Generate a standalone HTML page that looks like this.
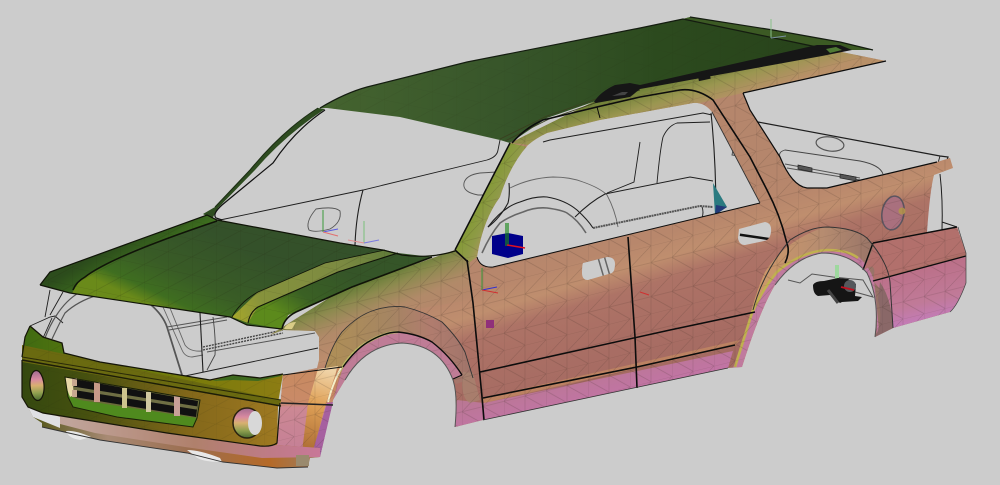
<!DOCTYPE html>
<html><head><meta charset="utf-8"><title>Car body</title>
<style>html,body{margin:0;padding:0;background:#ccc;overflow:hidden}svg{display:block}</style></head>
<body>
<svg width="1000" height="485" viewBox="0 0 1000 485" xmlns="http://www.w3.org/2000/svg">
<defs>
<pattern id="mesh" patternUnits="userSpaceOnUse" width="42" height="34" patternTransform="skewY(-14)">
<path d="M0 0H42M0 17H42M0 0V34M21 0V34M0 17L21 0M21 17L42 0M0 17L21 34M21 17L42 34" fill="none" stroke="#2c2018" stroke-width=".5" stroke-opacity=".24"/>
</pattern>
<pattern id="meshS" patternUnits="userSpaceOnUse" width="24" height="18" patternTransform="skewY(12)">
<path d="M0 0H24M0 0V18M0 18L24 0" fill="none" stroke="#20240c" stroke-width=".5" stroke-opacity=".28"/>
</pattern>
<linearGradient id="body" gradientUnits="userSpaceOnUse" x1="560" y1="230" x2="610" y2="395">
<stop offset="0" stop-color="#b5866c"/><stop offset=".2" stop-color="#b8876c"/><stop offset=".33" stop-color="#bf8e6e"/><stop offset=".45" stop-color="#ad7366"/><stop offset=".7" stop-color="#a96e64"/><stop offset="1" stop-color="#a46a62"/>
</linearGradient>
<linearGradient id="fend" gradientUnits="userSpaceOnUse" x1="372" y1="273" x2="398" y2="335">
<stop offset="0" stop-color="#58782e"/><stop offset=".28" stop-color="#8c8a4e"/><stop offset=".6" stop-color="#b08a68" stop-opacity=".85"/><stop offset="1" stop-color="#b08a68" stop-opacity="0"/>
</linearGradient>
<linearGradient id="roof" gradientUnits="userSpaceOnUse" x1="330" y1="0" x2="840" y2="0">
<stop offset="0" stop-color="#44632f"/><stop offset=".35" stop-color="#37552a"/><stop offset=".65" stop-color="#2c4a1e"/><stop offset="1" stop-color="#27421a"/>
</linearGradient>
<linearGradient id="rail" gradientUnits="userSpaceOnUse" x1="700" y1="68" x2="712" y2="106">
<stop offset="0" stop-color="#6a7e34"/><stop offset=".5" stop-color="#9a9650"/><stop offset="1" stop-color="#b89068"/>
</linearGradient>
<linearGradient id="pillar" gradientUnits="userSpaceOnUse" x1="478" y1="190" x2="508" y2="205">
<stop offset="0" stop-color="#7f9a2e"/><stop offset=".6" stop-color="#8f9a48"/><stop offset="1" stop-color="#b09660"/>
</linearGradient>
<linearGradient id="hood" gradientUnits="userSpaceOnUse" x1="200" y1="225" x2="160" y2="310">
<stop offset="0" stop-color="#34512a"/><stop offset=".55" stop-color="#395c26"/><stop offset=".85" stop-color="#3f6e20"/><stop offset="1" stop-color="#6a8a1a"/>
</linearGradient>
<linearGradient id="hoodL" gradientUnits="userSpaceOnUse" x1="125" y1="240" x2="145" y2="275">
<stop offset="0" stop-color="#2c4c1c"/><stop offset=".7" stop-color="#3e701e"/><stop offset="1" stop-color="#6a8a1a"/>
</linearGradient>
<linearGradient id="band" gradientUnits="userSpaceOnUse" x1="232" y1="318" x2="395" y2="252">
<stop offset="0" stop-color="#a8a82a"/><stop offset=".2" stop-color="#86923c"/><stop offset=".7" stop-color="#7c8a42"/><stop offset="1" stop-color="#5e7a38"/>
</linearGradient>
<linearGradient id="hoodR" gradientUnits="userSpaceOnUse" x1="345" y1="270" x2="300" y2="330">
<stop offset="0" stop-color="#355528"/><stop offset=".6" stop-color="#3a6024"/><stop offset="1" stop-color="#5c8a1c"/>
</linearGradient>
<linearGradient id="bumpT" gradientUnits="userSpaceOnUse" x1="20" y1="0" x2="290" y2="0">
<stop offset="0" stop-color="#3e6a12"/><stop offset=".3" stop-color="#5f7a0c"/><stop offset=".65" stop-color="#7a7c0a"/><stop offset="1" stop-color="#8e7c14"/>
</linearGradient>
<linearGradient id="bumpB" gradientUnits="userSpaceOnUse" x1="20" y1="0" x2="285" y2="0">
<stop offset="0" stop-color="#34480f"/><stop offset=".25" stop-color="#46500f"/><stop offset=".65" stop-color="#84681a"/><stop offset="1" stop-color="#a07a22"/>
</linearGradient>
<linearGradient id="lip" gradientUnits="userSpaceOnUse" x1="40" y1="0" x2="310" y2="0">
<stop offset="0" stop-color="#5a5a20"/><stop offset=".25" stop-color="#a88a74"/><stop offset=".55" stop-color="#9c6e50"/><stop offset=".85" stop-color="#b56a28"/><stop offset="1" stop-color="#a07a58"/>
</linearGradient>
<linearGradient id="lip2" gradientUnits="userSpaceOnUse" x1="70" y1="0" x2="320" y2="0">
<stop offset="0" stop-color="#c0a49a"/><stop offset=".5" stop-color="#b0806c"/><stop offset="1" stop-color="#c87898"/>
</linearGradient>
<linearGradient id="fog" x1="0" y1="0" x2="0" y2="1">
<stop offset="0" stop-color="#a06a90"/><stop offset=".3" stop-color="#d88aa0"/><stop offset=".5" stop-color="#d8b070"/><stop offset=".75" stop-color="#90a050"/><stop offset="1" stop-color="#4a6a30"/>
</linearGradient>
<linearGradient id="fnd" gradientUnits="userSpaceOnUse" x1="300" y1="370" x2="300" y2="460">
<stop offset="0" stop-color="#c88a60"/><stop offset=".36" stop-color="#c98a68"/><stop offset=".42" stop-color="#cc8894"/><stop offset="1" stop-color="#c47e96"/>
</linearGradient>
<linearGradient id="hi" gradientUnits="userSpaceOnUse" x1="328" y1="370" x2="306" y2="455">
<stop offset="0" stop-color="#f0d4a8"/><stop offset=".4" stop-color="#e0a258"/><stop offset="1" stop-color="#a86830"/>
</linearGradient>
<linearGradient id="sill" gradientUnits="userSpaceOnUse" x1="600" y1="360" x2="610" y2="400">
<stop offset="0" stop-color="#b87890"/><stop offset="1" stop-color="#c274a6"/>
</linearGradient>
<linearGradient id="rb" gradientUnits="userSpaceOnUse" x1="915" y1="268" x2="928" y2="325">
<stop offset="0" stop-color="#bb7088"/><stop offset=".6" stop-color="#c07a98"/><stop offset="1" stop-color="#c47cc0"/>
</linearGradient>
<linearGradient id="flare" gradientUnits="userSpaceOnUse" x1="335" y1="340" x2="472" y2="340">
<stop offset="0" stop-color="#ae8e58"/><stop offset=".4" stop-color="#a58562"/><stop offset=".7" stop-color="#b07c6e"/><stop offset="1" stop-color="#a0746a"/>
</linearGradient>
<linearGradient id="flareR" gradientUnits="userSpaceOnUse" x1="750" y1="260" x2="895" y2="260">
<stop offset="0" stop-color="#d09a68"/><stop offset=".5" stop-color="#b68c70"/><stop offset="1" stop-color="#8c6a64"/>
</linearGradient>
<path id="bodyP" fill-rule="evenodd" d="M270 335L340 291L455 250L510 143L593 102L640 87L817 47L886 61L743 93L750 110L780 157Q792 186 807 188L827 188L937 162L950 158L953 168L934 175Q930 190 927 232L957 227L966 253L966 283Q958 305 950 312L893 328L875 337Q880 300 867 273Q850 253 822 253Q795 257 775 285Q760 310 742 367L728 368L483 420L455 427Q458 395 453 380Q440 345 402 343Q365 345 345 380L333 400L320 457L277 445L283 375L317 368L319 360L319 337L315 331L283 330Z
M477 257Q483 220 500 197Q510 165 528 145Q536 138 547 133L600 120L693 103Q704 102 712 112L760 203L493 267Q480 268 477 257Z
M583 263L607 257Q615 257 615 264Q615 271 612 273L588 280Q582 280 582 273Q582 265 583 263Z
M739 229L765 222Q772 223 771 232Q770 240 764 241L745 245Q739 245 738 238Z"/>
<clipPath id="bodyC"><path clip-rule="evenodd" d="M270 335L340 291L455 250L510 143L593 102L640 87L817 47L886 61L743 93L750 110L780 157Q792 186 807 188L827 188L937 162L950 158L953 168L934 175Q930 190 927 232L957 227L966 253L966 283Q958 305 950 312L893 328L875 337Q880 300 867 273Q850 253 822 253Q795 257 775 285Q760 310 742 367L728 368L483 420L455 427Q458 395 453 380Q440 345 402 343Q365 345 345 380L333 400L320 457L277 445L283 375L317 368L319 360L319 337L315 331L283 330Z
M477 257Q483 220 500 197Q510 165 528 145Q536 138 547 133L600 120L693 103Q704 102 712 112L760 203L493 267Q480 268 477 257Z
M583 263L607 257Q615 257 615 264Q615 271 612 273L588 280Q582 280 582 273Q582 265 583 263Z
M739 229L765 222Q772 223 771 232Q770 240 764 241L745 245Q739 245 738 238Z"/></clipPath>
<clipPath id="bC"><path d="M30 326L43 337L62 343L64 353L100 362L180 375L210 380L233 375L260 378L283 374L278 403L277 445L260 446L167 433L43 413L28 407L22 397L22 357L25 337Z"/></clipPath>
<clipPath id="fC"><path d="M283 375L342 367L333 400L320 457L310 458L277 445Z"/></clipPath>
</defs>

<rect width="1000" height="485" fill="#cccccc"/>

<!-- interior wireframe -->
<g fill="none" stroke="#1e1e1e" stroke-width=".9">
<path d="M220 220L363 190L487 160Q497 157 498 150L500 140"/>
<path d="M363 190Q356 215 355 245" stroke-width="1.1"/>
<path d="M316 209Q335 206 340 211Q342 222 330 229Q315 233 309 230Q305 222 316 209Z" stroke="#555"/>
<path d="M480 173L497 172M497 195L478 195Q462 192 464 183Q466 175 480 173" stroke="#555"/>
<path d="M510 188Q530 178 553 177Q570 177 583 182Q600 188 607 195Q615 210 618 227" stroke="#666"/>
<path d="M488 227Q503 207 520 202Q535 196 547 197Q565 200 577 210Q588 220 593 228" stroke-width="1.1"/>
<path d="M482 253Q490 235 500 223Q510 216 523 212Q535 207 547 208Q562 210 567 213Q578 220 586 233" stroke="#666" stroke-width="1.6"/>
<path d="M509 183Q510 195 508 203Q500 218 488 227" stroke-width="1.1"/>
<path d="M575 217Q590 202 605 194L690 177L713 181" stroke-width="1"/>
<path d="M607 193L634 182L640 142"/>
<path d="M543 142L550 140L703 113L712 115" stroke-width="1"/>
<path d="M657 183Q660 150 663 137Q668 126 677 123L710 122"/>
<path d="M711 113Q716 160 716 215" stroke-width="1.1"/>
<path d="M593 228L680 210L700 206L713 207" stroke="#555" stroke-width="2" stroke-dasharray="2 .6"/>
<path d="M702 207Q704 212 702 218"/>
<path d="M758 122L940 156L948 157L946 163" stroke-width="1.2"/>
<path d="M940 156L938 163"/>
<path d="M780 157Q778 152 785 150L860 161Q880 165 883 174" stroke="#444"/>
<path d="M785 164L860 178M787 168L860 180" stroke="#555"/>
<path d="M733 150L732 155L738 156" stroke="#444"/>
<path d="M940 174Q943 200 942 230M942 222L957 227" stroke-width="1"/>
<ellipse cx="830" cy="144" rx="14" ry="7" transform="rotate(8 830 144)" stroke="#555" stroke-width="1.2"/>
<!-- engine bay -->
<path d="M30 326L50 317L55 316L63 323M50 290L45 317M63 292L50 315M43 338L52 318"/>
<path d="M45 338Q50 325 56 316Q66 300 80 292M52 339Q60 322 65 313Q78 301 98 295" stroke="#555" stroke-width="1.2"/>
<path d="M150 304Q163 315 167 327L182 375" stroke="#555" stroke-width="1.8"/>
<path d="M163 307L182 350Q185 357 192 357L203 355M170 308L185 345Q190 352 202 351" stroke="#666"/>
<path d="M167 327L227 317M169 330L227 320" stroke="#555"/>
<path d="M200 313L203 372" stroke-width="1.1"/>
<path d="M213 317Q216 340 215 355L207 370" stroke="#444"/>
<path d="M185 376L318 348"/>
<path d="M203 347L283 330M203 350L283 333" stroke="#444" stroke-width="1.4" stroke-dasharray="2 1"/>
<path d="M207 352L315 333" stroke="#555"/>
</g>
<!-- left A-pillar -->
<path d="M318 108Q283 130 250 170L215 207L203 214L212 219L218 208L255 170Q285 135 325 109Z" fill="#2e4c20"/>
<path d="M325 110Q295 130 273 163L222 205Q212 214 216 218L222 220" fill="none" stroke="#111" stroke-width="1.2"/>
<path d="M318 108Q283 130 250 170L215 207" fill="none" stroke="#1c2c14" stroke-width="1"/>
<!-- teal piece -->
<path d="M713 183L727 207L715 215Z" fill="#2a7a80"/><path d="M716 205L727 207L715 215Z" fill="#223a78"/>
<path d="M597 254L604 278M603 252L610 276" stroke="#666" stroke-width="1.5"/>
<path d="M740 234L770 240" stroke="#111" stroke-width="2.5" transform="rotate(-3 755 236)"/>
<path d="M800 166l14 3v4l-14-3zM842 175l16 3v4l-16-3z" fill="#555" stroke="#222" stroke-width=".7" transform="translate(-2 -1)"/>

<!-- rear hardware -->
<path d="M788 280L800 283L812 274L833 277L863 280L873 297L848 290" fill="none" stroke="#555" stroke-width="1"/>
<path d="M835 265h4v14h-4z" fill="#9ed89e"/>
<path d="M813 285Q815 281 824 281L838 278L848 279L856 284L855 296L862 297L858 301L842 302L840 303L830 295L818 296Q813 294 813 285Z" fill="#151515"/>
<path d="M828 290L838 303" stroke="#444" stroke-width="3"/>
<circle cx="850" cy="286" r="6" fill="#55585c"/>
<path d="M841 287L854 290" stroke="#c01020" stroke-width="1.8"/>

<!-- body -->
<use href="#bodyP" fill="url(#body)"/>

<g clip-path="url(#bodyC)">
<path d="M270 335L340 291L455 250L470 262L470 300L400 312L345 345L325 375L300 372Z" fill="url(#fend)"/>
<!-- front flare -->
<path d="M325 368Q332 345 342 332Q358 315 375 310Q390 305 405 307Q425 312 442 322Q458 338 465 352L474 378L456 384Q440 345 402 343Q365 345 345 380Z" fill="url(#flare)"/>
<!-- front arch inner -->
<path d="M343 367Q355 350 368 342Q385 332 398 332Q418 334 432 342Q450 356 462 375L453 379Q440 345 402 343Q365 345 345 380L333 400Z" fill="#bf7c96"/>
<path d="M338 374Q352 350 368 342Q385 332 398 332" fill="none" stroke="#bcbc68" stroke-width="2.6"/>
<!-- rear flare -->
<path d="M745 340Q752 300 765 272Q785 240 825 227Q855 228 870 240Q888 262 893 330L876 337Q880 300 867 273Q850 253 822 253Q795 257 775 285Q760 310 742 367Z" fill="url(#flareR)"/>
<path d="M752 313Q760 290 777 272Q800 251 827 249Q850 250 860 258Q870 268 874 280L880 340L876 340Q880 300 867 273Q850 253 822 253Q795 257 775 285Q760 310 742 367L733 368Z" fill="#c07a9e"/>
<path d="M735 367L752 313Q762 290 777 272Q800 252 827 250Q848 250 858 258" fill="none" stroke="#c0b050" stroke-width="2.6"/>
<!-- fuel door -->
<ellipse cx="893" cy="213" rx="11" ry="17" transform="rotate(10 893 213)" fill="#a9707e" stroke="#5c5560" stroke-width="1.5"/>
<circle cx="902" cy="211" r="3.5" fill="#b09050"/>
<!-- sill strips -->
<path d="M482 398L740 340L735 346L484 403Z" fill="#bc8262"/>
<path d="M484 403L733 351L728 368L483 420L455 427L457 400Z" fill="url(#sill)"/>
<path d="M463 372L473 373L480 400L470 403Q463 400 462 385Z" fill="#a88470" opacity=".7"/>
<!-- rear bumper -->
<path d="M875 243L957 227L966 253L873 280Q878 260 864 270Z" fill="#b2706c"/>
<path d="M873 281L966 256L966 283Q958 305 950 312L893 328Q892 300 873 281Z" fill="url(#rb)"/>
<path d="M878 300Q884 320 875 337L893 328Q892 300 880 282Z" fill="#8a6868"/>
<!-- roof rail and pillars -->
<path d="M512 143L540 126L593 102L640 87L817 47L886 61L743 93L700 103L600 120L547 133L528 145Z" fill="url(#rail)"/>
<path d="M455 250L510 143L528 147Q510 165 500 197Q483 220 477 257L470 262Z" fill="url(#pillar)"/>
<rect x="270" y="40" width="720" height="400" fill="url(#mesh)"/>
</g>
<!-- roof -->
<path d="M320 108Q345 93 367 87L467 62L640 28L683 19L690 17L773 30L840 42L873 50L850 50L817 47L640 87L593 102L547 118L510 143L500 140L400 117L327 108Z" fill="url(#roof)"/>
<path d="M690 17L773 30L840 42L873 50L850 50L817 47L683 19Z" fill="#3c5a24"/>
<path d="M320 108L327 108L400 117L500 140L547 118L593 102L640 87L817 47L683 19L467 62L367 87Z" fill="url(#meshS)" opacity=".5"/>
<path d="M320 108Q345 93 367 87L467 62L640 28L683 19L817 47M690 17L773 30L840 42L873 50" fill="none" stroke="#141c10" stroke-width="1.2"/>
<path d="M500 139L547 116L593 100L640 86M505 141L549 119L595 103L640 90" fill="none" stroke="#3a4020" stroke-width=".9"/>
<!-- roof rail hardware -->
<path d="M594 102Q600 92 615 85L630 83L640 85L817 45L840 45L852 50L822 56L640 89L630 97L596 103Z" fill="#161616"/>
<path d="M826 49L836 47L842 50L830 53Z" fill="#4f7a34"/>
<path d="M612 96L622 92L628 92L625 95Z" fill="#444"/>
<path d="M698 73h12v7h-12z" fill="#161616" transform="rotate(-12 704 76)"/>
<!-- hood -->
<path d="M40 285L50 272L207 215L217 220L340 243L383 250L402 255L432 257L352 287L288 315L282 329L247 325L230 317L70 293Z" fill="url(#hood)"/>
<path d="M40 285L50 272L207 215L217 221L133 250L80 280L72 293Z" fill="url(#hoodL)"/>
<path d="M232 317L258 292L325 263L385 250L398 253L338 272L258 307L248 323Z" fill="url(#band)"/>
<path d="M248 323L258 307L338 272L398 253L432 257L352 287L288 315L282 329Z" fill="url(#hoodR)"/>
<path d="M40 285L50 272L207 215L217 220L340 243L400 254L432 257L352 287L288 315L282 329L247 325L230 317L70 293Z" fill="url(#meshS)"/>
<g fill="none" stroke="#101408">
<path d="M40 285L50 272L207 215L217 220L340 243L383 250L402 255Q430 259 455 251" stroke-width="1.2"/>
<path d="M40 285L70 293L230 317L247 325L282 329" stroke-width="1.2"/>
<path d="M73 290Q76 282 85 277Q110 257 217 221" stroke-width="1.5"/>
<path d="M282 329Q284 318 296 312L352 287L432 257" stroke-width="1.6"/>
<path d="M248 323Q250 312 258 307L338 272L398 253" stroke-width="1.1"/>
<path d="M232 317Q240 302 258 292L325 263L385 250" stroke-width=".8"/>
</g>
<path d="M284 329Q287 322 296 322L292 329Z" fill="#e8d890" opacity=".85"/>
<!-- fender front -->
<path d="M283 375L342 367L333 400L320 457L310 458L277 445Z" fill="url(#fnd)"/>
<path d="M318 369L338 366L326 403L312 456L302 452L308 403Z" fill="url(#hi)"/>
<path d="M327 403L333 402L320 457L311 457Z" fill="#a660a0"/>
<path d="M341 368Q332 385 328 402" fill="none" stroke="#f5f0c8" stroke-width="2"/>
<rect x="275" y="365" width="70" height="95" fill="url(#mesh)" clip-path="url(#fC)"/>
<path d="M281 403L333 405" stroke="#222" stroke-width="1.5"/>
<path d="M283 375L342 367" stroke="#111" stroke-width="1.1"/>
<!-- lip -->
<path d="M28 407L43 413L167 433L260 446L277 445L320 448L320 457L310 458L308 467L277 468L223 462L187 453L100 440L42 427L42 423L33 417Z" fill="url(#lip)"/>
<path d="M28 407L43 413L167 433L260 446L277 445L320 448L320 457L262 458L185 447L95 433L33 417Z" fill="url(#lip2)"/>
<path d="M28 407L60 417L60 428L33 417Z" fill="#dfe0e4"/>
<path d="M66 431Q75 430 91 437L80 440Q68 438 66 431Z" fill="#e8e8e8"/>
<path d="M187 450Q200 450 220 458L222 462Q200 462 195 456Z" fill="#e8e8e8"/>
<path d="M42 427L100 440L187 453L223 462L277 468L308 467" fill="none" stroke="#333" stroke-width=".9"/>
<path d="M296 455h13v11h-13z" fill="#9a8a6e"/>
<!-- bumper -->
<path d="M30 326L43 337L62 343L64 353L100 362L180 375L210 380L233 375L260 378L283 374L278 403L22 360L25 337Z" fill="url(#bumpT)"/>
<path d="M233 375L260 378L283 374L281 376L258 381L233 380L212 381Z" fill="#3e6a1e"/>
<path d="M22 360L278 406L277 445L260 446L167 433L43 413L28 407L22 397Z" fill="url(#bumpB)"/>
<path d="M22 345L281 400L280 406L22 362Z" fill="#6a6a10"/>
<path d="M22 360L281 406" stroke="#1c1c08" stroke-width="1.4"/>
<path d="M22 357L281 400" stroke="#2a2a08" stroke-width="1"/>
<path d="M30 326L43 337L62 343L64 353L100 362L180 375L210 380L233 375L260 378L283 374" fill="none" stroke="#151508" stroke-width="1.3"/>
<path d="M22 357L25 337L30 326M22 360L22 397L28 407L43 413L167 433L260 446Q272 447 277 443L280 403" fill="none" stroke="#151508" stroke-width="1.2"/>
<rect x="20" y="325" width="265" height="125" fill="url(#meshS)" opacity=".6" clip-path="url(#bC)"/>
<!-- grille surround -->
<path d="M65 377L200 400L197 420L193 427L117 417L73 407L68 397Z" fill="#4f8a1e"/>
<path d="M65 377L200 400L197 418L80 400L70 396Z" fill="#6a6a3a"/>
<path d="M74 379L198 401L196 417L74 397Z" fill="#111"/>
<path d="M72 388L197 408" stroke="#6f6f44" stroke-width="3.2"/>
<path d="M65 377L72 378L74 395L70 397Q66 388 65 377Z" fill="#e8d8a8"/>
<path d="M72 378h5v8h-5zM72 390h5v7h-5z" fill="#c8a890"/>
<g>
<path d="M94 382h6v20h-6z" fill="#c89a88"/>
<path d="M122 388h5v20h-5z" fill="#cdc48e"/>
<path d="M146 392h5v20h-5z" fill="#d0c8a0"/>
<path d="M174 396h6v20h-6z" fill="#c8a098"/>
</g>
<path d="M65 377L200 400L197 418L193 427L117 417L73 407L68 397Z" fill="none" stroke="#1a2008" stroke-width="1"/>
<!-- fog lights -->
<ellipse cx="37" cy="385.5" rx="7" ry="15" transform="rotate(-4 37 385)" fill="url(#fog)" stroke="#151508" stroke-width="1.2"/>
<ellipse cx="247" cy="423" rx="14" ry="15" fill="url(#fog)" stroke="#2a2210" stroke-width="1.5"/>
<ellipse cx="255" cy="423" rx="7" ry="12" fill="#d8d8d8"/>

<!-- body lines -->
<g fill="none" stroke="#0c0c0c">
<path d="M512 143Q525 128 543 120L597 107L640 97L680 90Q697 88 713 100L750 157L767 190Q780 215 786 240L788 247Q789 255 785 263" stroke-width="1.6"/>
<path d="M597 107L600 118" stroke-width="1"/>
<path d="M467 260L473 303L482 397L484 420" stroke-width="1.6"/>
<path d="M455 250L468 262" stroke-width="1.6"/>
<path d="M455 250L510 143" stroke-width="1.5"/>
<path d="M628 237L635 337L637 388" stroke-width="1.6"/>
<path d="M480 372L670 330L755 312" stroke-width="1.5"/>
<path d="M483 398L637 367L735 345" stroke-width="1.6"/>
<path d="M873 243L957 227M873 243L863 270" stroke-width="1.4"/>
<path d="M873 281L966 256" stroke-width="1.3"/>
<path d="M958 227L966 253L966 283Q958 305 950 312" stroke-width=".7" stroke="#444"/>
<path d="M743 93L750 110L780 157Q792 186 807 188L827 188L937 162" stroke-width="1.2"/>
<path d="M886 61L743 93" stroke-width="1.2"/>
<path d="M477 257Q480 268 493 267L760 203" stroke-width="1"/>
<path d="M760 203L712 112" stroke-width=".9" stroke="#333"/>
<path d="M343 367Q355 350 368 342Q385 332 398 332Q418 334 432 342Q450 356 462 375" stroke-width="1.4"/>
<path d="M462 375L453 379" stroke-width="1"/>
<path d="M753 310Q763 272 790 240Q810 227 827 227Q855 228 867 238Q888 262 890 282L893 328" stroke="#333" stroke-width="1"/>
<path d="M325 368Q332 345 342 332Q358 315 375 310Q390 305 405 307Q425 312 442 322Q458 338 465 352L473 378" stroke="#333" stroke-width=".9"/>
<path d="M455 427Q458 395 453 380Q440 345 402 343Q365 345 345 380" stroke="#555" stroke-width="1"/>
<path d="M875 337Q880 300 867 273Q850 253 822 253Q795 257 775 285" stroke="#555" stroke-width="1"/>
<path d="M483 420L728 368" stroke="#333" stroke-width=".8"/>
</g>

<!-- axis markers -->
<g fill="none" stroke-width="1">
<path d="M323 210V232" stroke="#3a9a3a"/><path d="M323 232L338 229" stroke="#5a5ae0"/><path d="M323 232L338 236" stroke="#e07070"/>
<path d="M364 221V243" stroke="#7ac07a"/><path d="M364 243L379 240" stroke="#7a7ae0"/><path d="M364 243L348 240" stroke="#e09090"/>
<path d="M771 19V38" stroke="#8ac08a"/><path d="M771 38L786 36" stroke="#7a90a0"/>
<path d="M482 268V290" stroke="#3a9a3a"/><path d="M482 290L497 287" stroke="#3030d0"/><path d="M482 290L498 293" stroke="#d03030"/>
<path d="M640 292L649 295" stroke="#d03030"/>
</g>
<path d="M492 236L508 233L523 236V254L508 258L492 254Z" fill="#00008a"/>
<path d="M506 223V246M508 223V246" stroke="#1a8a1a" stroke-width="1.2"/>
<path d="M507 245L525 248" stroke="#e01020" stroke-width="1.5"/>
<path d="M486 320h8v8h-8z" fill="#90307a"/>
</svg>
</body></html>
